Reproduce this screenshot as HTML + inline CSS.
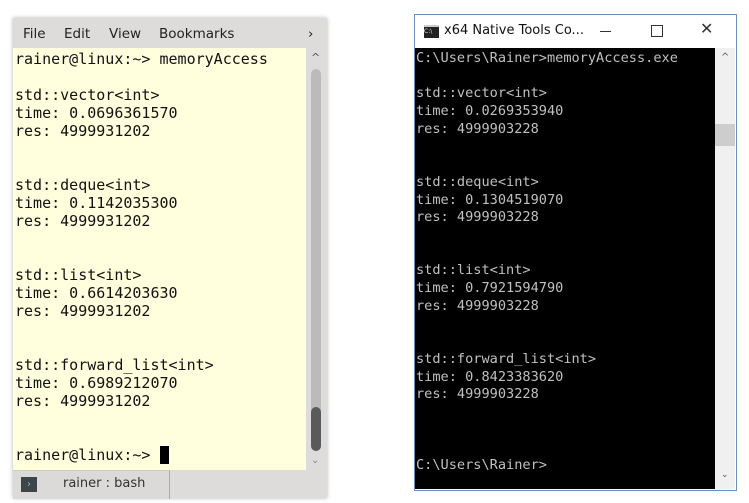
<!DOCTYPE html><html><head><style>
body{margin:0;width:749px;height:503px;background:#fff;position:relative;overflow:hidden;font-family:"DejaVu Sans","Liberation Sans",sans-serif}
.a{position:absolute}
.lt{left:13px;top:18px;width:314px;height:480px;background:#dedcda;box-shadow:0 0 4px rgba(0,0,0,.3)}
.menu{left:13px;top:18px;height:30px;font-size:13.5px;color:#222;line-height:32px}
.term{left:13px;top:48px;width:293px;height:422px;background:#ffffdd}
pre{margin:0;position:absolute;font-family:"DejaVu Sans Mono","Liberation Mono",monospace}
.lp{left:15px;top:50px;font-size:15px;line-height:18px;color:#111}
.rt{left:414px;top:14px;width:321px;height:475px;border:1px solid #6b8fb8;background:#fff}
.con{left:415px;top:48px;width:300px;height:441px;background:#000}
.rp{left:416px;top:50px;font-size:13.6px;line-height:17.7px;color:#c0c0c0}
</style></head><body>
<div class="a lt"></div>
<div class="a menu"><span style="position:absolute;left:10px">File</span><span style="position:absolute;left:51px">Edit</span><span style="position:absolute;left:96px">View</span><span style="position:absolute;left:146px">Bookmarks</span><span style="position:absolute;left:295px">›</span></div>
<div class="a term"></div>
<pre class="a lp">rainer@linux:~&gt; memoryAccess

std::vector&lt;int&gt;
time: 0.0696361570
res: 4999931202


std::deque&lt;int&gt;
time: 0.1142035300
res: 4999931202


std::list&lt;int&gt;
time: 0.6614203630
res: 4999931202


std::forward_list&lt;int&gt;
time: 0.6989212070
res: 4999931202


rainer@linux:~&gt; <span style="background:#000">&nbsp;</span></pre>
<div class="a" style="left:306px;top:48px;width:21px;height:422px;background:#dedcda"></div>
<div class="a" style="left:311px;top:51px;font-size:11px;color:#555">^</div>
<div class="a" style="left:311px;top:69px;width:10px;height:382px;border-radius:5px;background:#bdbbb9"></div>
<div class="a" style="left:311px;top:407px;width:10px;height:44px;border-radius:5px;background:#5a5a5a"></div>
<div class="a" style="left:311px;top:455px;font-size:10px;color:#888">⌄</div>
<div class="a" style="left:13px;top:470px;width:156px;height:28px;background:#dcdad8;border-right:1px solid #aaa;border-top:1px solid #ccc"></div>
<div class="a" style="left:21px;top:477px;width:16px;height:15px;background:#3a4648;color:#9ab;font-size:10px;line-height:15px;text-align:center">›</div>
<div class="a" style="left:63px;top:476px;font-size:13px;color:#333">rainer : bash</div>

<div class="a rt"></div>
<div class="a" style="left:424px;top:25px;width:15px;height:11px;background:#222;border-top:2px solid #ccc;font-size:6px;color:#ddd;line-height:9px">C:\</div>
<div class="a" style="left:444px;top:23px;font-size:13px;color:#111">x64 Native Tools Co...</div>
<div class="a" style="left:600px;top:31px;width:11px;height:1px;background:#333"></div>
<div class="a" style="left:651px;top:25px;width:10px;height:10px;border:1px solid #333"></div>
<div class="a" style="left:700px;top:19px;font-size:16px;color:#333">✕</div>
<div class="a con"></div>
<pre class="a rp">C:\Users\Rainer&gt;memoryAccess.exe

std::vector&lt;int&gt;
time: 0.0269353940
res: 4999903228


std::deque&lt;int&gt;
time: 0.1304519070
res: 4999903228


std::list&lt;int&gt;
time: 0.7921594790
res: 4999903228


std::forward_list&lt;int&gt;
time: 0.8423383620
res: 4999903228



C:\Users\Rainer&gt;</pre>
<div class="a" style="left:715px;top:48px;width:20px;height:441px;background:#f0f0f0"></div>
<div class="a" style="left:715px;top:124px;width:20px;height:22px;background:#cdcdcd"></div>
<div class="a" style="left:721px;top:52px;font-size:10px;color:#555">^</div>
<div class="a" style="left:721px;top:470px;font-size:9px;color:#555">⌄</div>
</body></html>
